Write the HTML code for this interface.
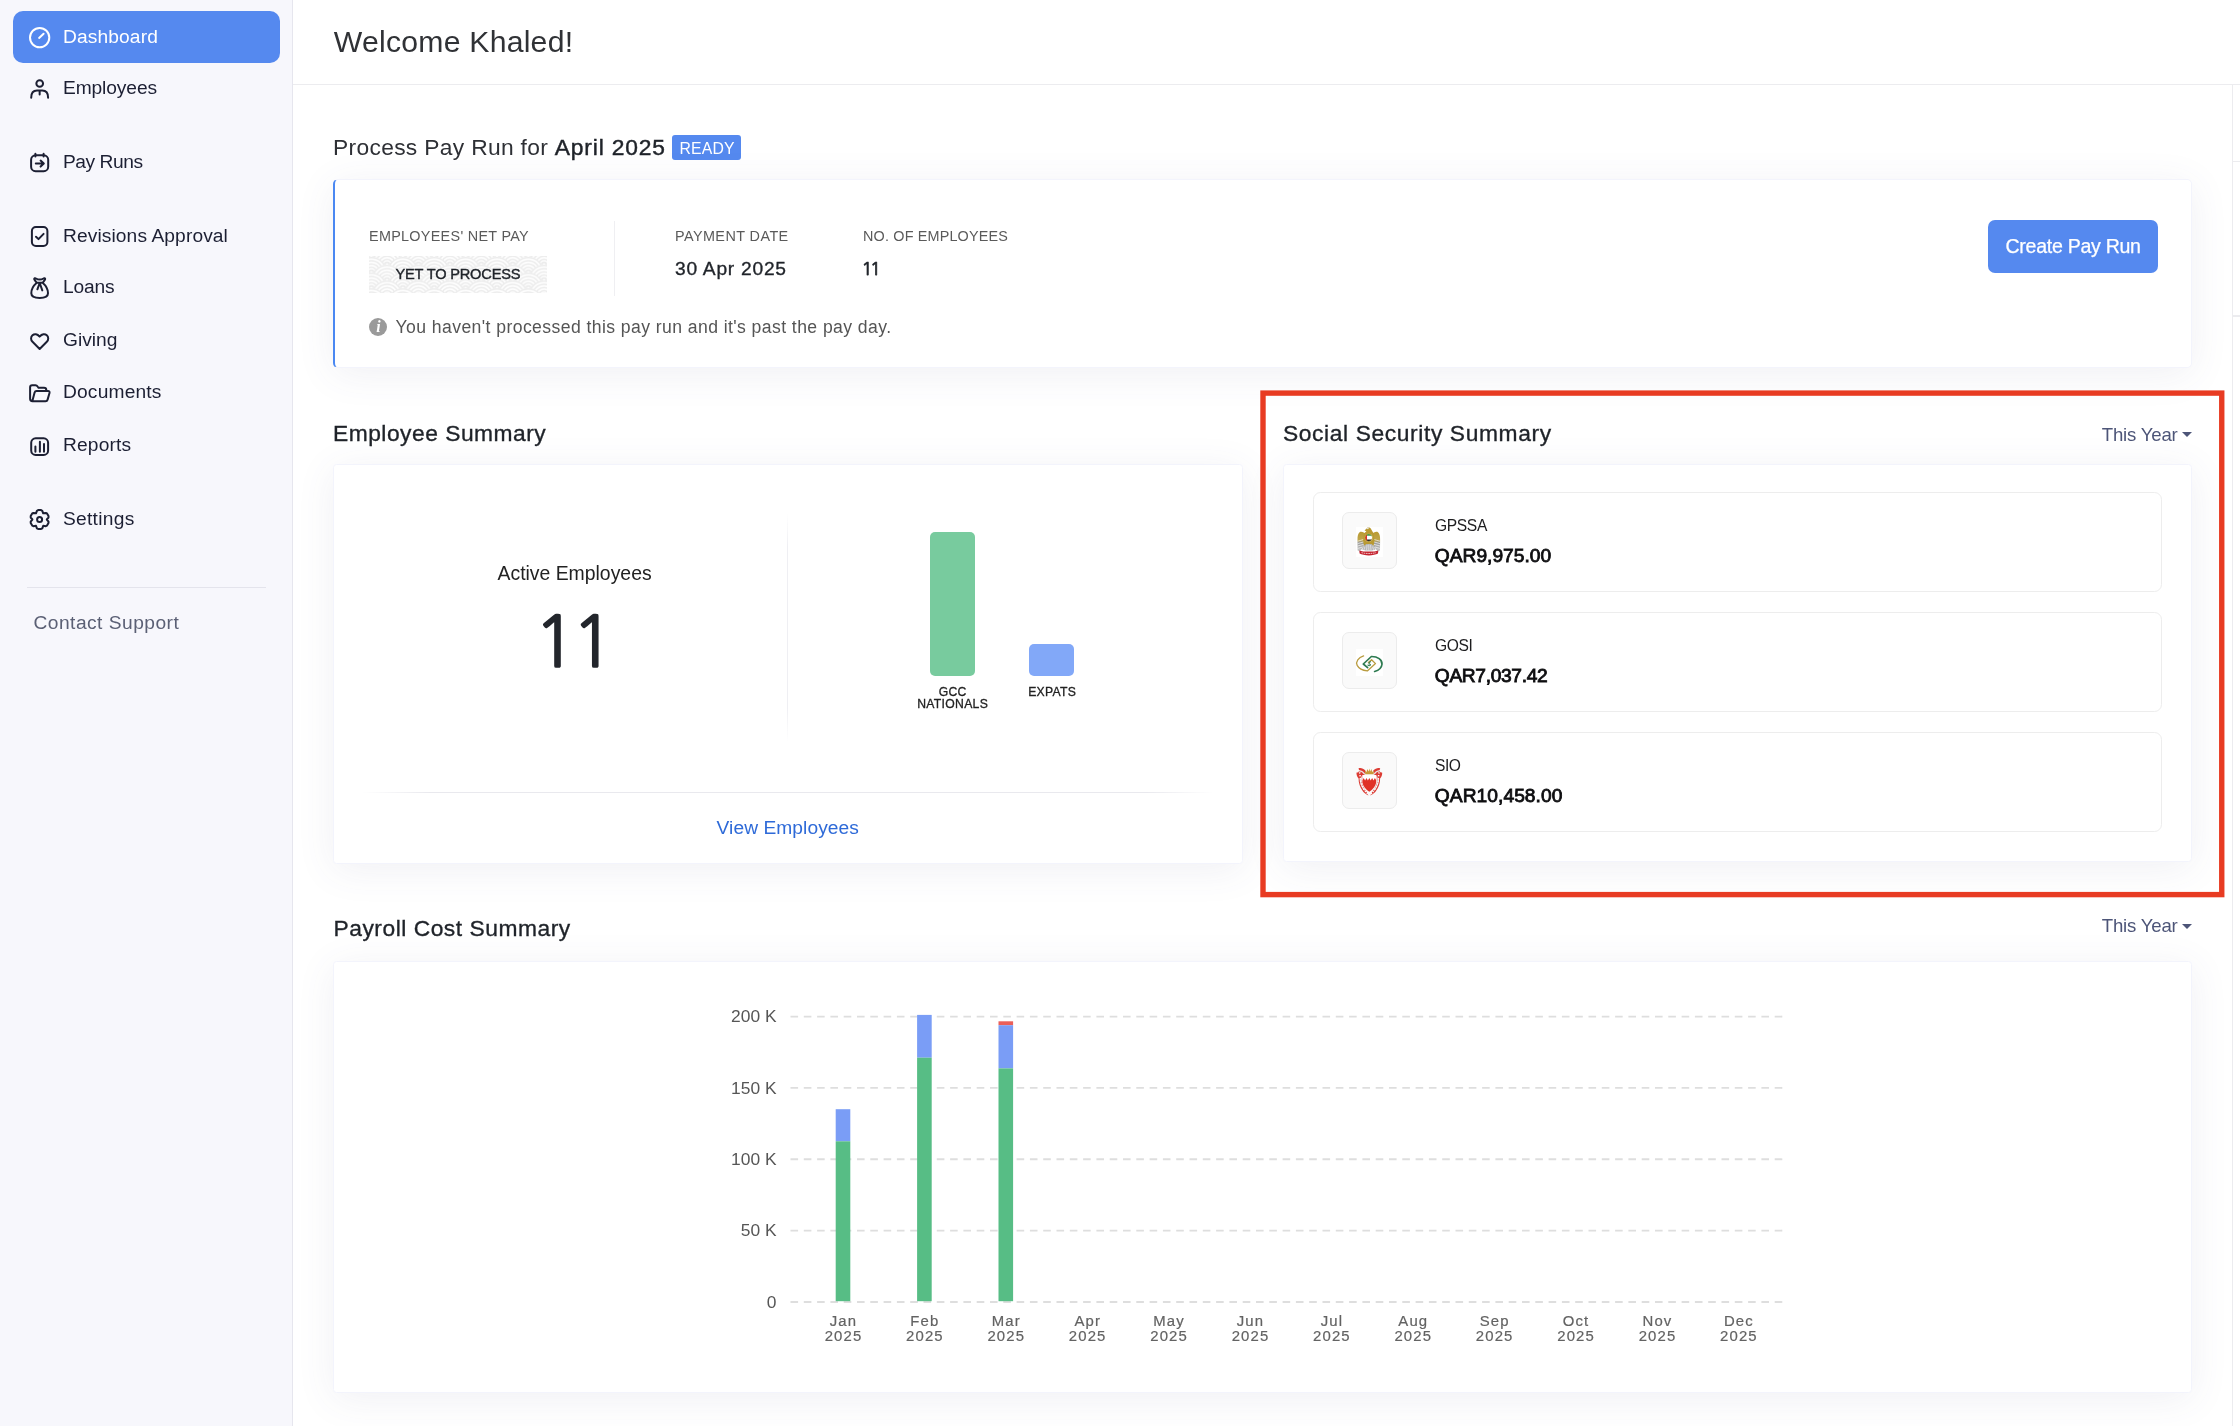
<!DOCTYPE html>
<html lang="en">
<head>
<meta charset="utf-8">
<title>Dashboard</title>
<style>
*{box-sizing:border-box;margin:0;padding:0}
html,body{width:2240px;height:1426px;overflow:hidden;background:#fff}
body{position:relative;font-family:"Liberation Sans",Arial,sans-serif;color:#1f2329}
.abs{position:absolute}
.t{position:absolute;white-space:nowrap;line-height:1;display:block}
#side{position:absolute;left:0;top:0;width:293px;height:1426px;background:#f7f7fc;border-right:1.5px solid #e6e6ee}
#main{position:absolute;left:293px;top:0;width:1947px;height:1426px;background:#fff}
#content{position:absolute;left:293px;top:85px;width:1939px;height:1341px;background:#fff}
.nav{font-size:19.2px;color:#1c1f33;left:63px}
.ico{position:absolute;left:26px;width:28px;height:28px;fill:none;stroke:#1c1f33;stroke-width:2;stroke-linecap:round;stroke-linejoin:round;overflow:visible}
.card{position:absolute;background:#fff;border:1px solid #f3f4fc;border-radius:3.5px;box-shadow:0 6px 38px rgba(80,80,130,.085)}
.h2{font-size:22.8px;color:#1f2329;-webkit-text-stroke:.35px #1f2329}
.lbl{font-size:14.4px;color:#5a5a5a}
.val{font-size:19.2px;color:#1f2329;-webkit-text-stroke:.35px #1f2329}
.yr{font-size:18.6px;color:#4d5578}
.caret{position:absolute;width:0;height:0;border-left:5px solid transparent;border-right:5px solid transparent;border-top:5.5px solid #4d5578}
.item{position:absolute;left:1313px;width:849px;height:100px;border:1px solid #ededed;border-radius:7.5px;background:#fff}
.logo{position:absolute;left:1342px;width:55px;height:57px;border:1.5px solid #ececec;border-radius:7px;background:#fafafa}
.logo i{position:absolute;left:13.1px;top:14px;width:26.6px;height:29.8px;background:#fff;display:block}
.nm{font-size:15.6px;color:#1d1d1f;left:1435px}
.amt{font-size:19.2px;color:#0e0e10;left:1434.8px;-webkit-text-stroke:.85px #0e0e10}
</style>
</head>
<body>
<div id="wrap" style="position:absolute;left:0;top:0;width:2240px;height:1426px;will-change:transform">
<div id="main"></div>
<div id="content"></div>
<div id="side"></div>
<!--SIDEBAR-->
<div class="abs" style="left:13px;top:11px;width:267px;height:52px;background:#5589ef;border-radius:10px"></div>
<svg class="abs" style="left:0;top:0;overflow:visible" width="293" height="600" viewBox="0 0 293 600" fill="none" stroke="#1c1f33" stroke-width="2" stroke-linecap="round" stroke-linejoin="round">
<g stroke="#fff"><circle cx="39.65" cy="37.6" r="9.65"/><path d="M39.1,37.9 L43.6,33.7"/></g>
<circle cx="39.7" cy="83.5" r="3.35"/><path d="M31.2,97.7 C31.2,93 33.5,90.5 37,90.5 L42.3,90.5 C45.8,90.5 48.1,93 48.1,97.7 M39.65,90.5 V94.5"/>
<rect x="31.1" y="155.3" width="17.1" height="15.9" rx="4.5"/><path d="M35.4,153.8 V156.5 M43.6,153.8 V156.5 M35.8,163.6 H43.6 M40.6,160.6 L43.8,163.6 L40.6,166.6"/>
<rect x="31.9" y="227.1" width="15.5" height="18.8" rx="4"/><path d="M36,236.7 L38.5,239.1 L43.6,233.9"/>
<path d="M34.3,279.4 C33.9,278.2 35.2,277.8 36.1,278.5 C38,279.9 41.4,279.9 43.3,278.5 C44.2,277.8 45.5,278.2 45.1,279.4 L42.7,282.8 L36.7,282.8 Z M36.8,282.8 C33,286 31.3,290 31.3,293.3 C31.3,296.5 34,298 39.7,298 C45.4,298 48,296.5 48,293.3 C48,290 46.3,286 42.6,282.8 M39.7,283 L37.4,289.3 M39.7,283 L42.3,290.4"/>
<path d="M39.65,349 L32.5,341.8 C30.6,339.9 30.6,337 32.5,335.3 C34.4,333.6 37.3,333.9 39.65,336.6 C42,333.9 44.9,333.6 46.8,335.3 C48.7,337 48.7,339.9 46.8,341.8 Z"/>
<path d="M32.5,401.2 C31,401.2 30.1,400.3 30.1,398.8 L30.1,387.3 C30.1,386 31,385.3 32.2,385.3 L35.5,385.3 C36.5,385.3 37,385.6 37.6,386.5 L38.6,387.8 L44,387.8 C45.5,387.8 46.3,388.6 46.3,390 L46.3,391 M32.3,401.2 L34.6,392.5 C34.9,391.5 35.5,391 36.5,391 L48,391 C49.3,391 49.8,391.8 49.5,393 L47.6,399.6 C47.3,400.7 46.6,401.2 45.5,401.2 Z"/>
<rect x="31.2" y="438.3" width="16.9" height="16.6" rx="4.5"/><path d="M35.4,446.6 V451.8 M39.9,441.7 V451.8 M44,444.1 V451.8"/>
<path d="M42.3,510.8 L41.1,510.1 L38.1,510.1 L36.9,510.8 L36.0,513.3 L33.4,512.9 L32.2,513.5 L30.7,516.1 L30.7,517.5 L32.4,519.5 L30.7,521.6 L30.7,523.0 L32.2,525.6 L33.4,526.2 L36.0,525.8 L36.9,528.3 L38.1,529.0 L41.1,529.0 L42.3,528.3 L43.2,525.8 L45.8,526.2 L47.0,525.6 L48.5,523.0 L48.5,521.6 L46.8,519.5 L48.5,517.5 L48.5,516.1 L47.0,513.5 L45.8,512.9 L43.2,513.3Z"/><circle cx="39.6" cy="519.5" r="2.5"/>
</svg>
<span id="n1" class="t nav" style="top:26.9px;letter-spacing:0.12px;color:#fff">Dashboard</span>
<span id="n2" class="t nav" style="top:77.8px;letter-spacing:-0.11px">Employees</span>
<span id="n3" class="t nav" style="top:151.8px;letter-spacing:-0.45px">Pay Runs</span>
<span id="n4" class="t nav" style="top:225.8px;letter-spacing:0.1px">Revisions Approval</span>
<span id="n5" class="t nav" style="top:277.4px;letter-spacing:-0.18px">Loans</span>
<span id="n6" class="t nav" style="top:329.8px;letter-spacing:0px">Giving</span>
<span id="n7" class="t nav" style="top:382.2px;letter-spacing:0.17px">Documents</span>
<span id="n8" class="t nav" style="top:435.2px;letter-spacing:0.16px">Reports</span>
<span id="n9" class="t nav" style="top:509.2px;letter-spacing:0.27px">Settings</span>
<div class="abs" style="left:27px;top:586.5px;width:239px;height:1.5px;background:#e4e4ec"></div>
<span id="n10" class="t" style="left:33.5px;top:612.7px;font-size:19.2px;letter-spacing:.47px;color:#5b6075">Contact Support</span>
<!--HEADER-->
<span id="h1" class="t" style="left:333.8px;top:26.5px;font-size:30.2px;color:#303236;letter-spacing:.23px">Welcome Khaled!</span>
<div class="abs" style="left:293px;top:83.5px;width:1947px;height:1.5px;background:#ececef"></div>
<div class="abs" style="left:2231.5px;top:85px;width:1.5px;height:1341px;background:#ececef"></div>
<div class="abs" style="left:2233px;top:85px;width:7px;height:1341px;background:#fff"></div>
<div class="abs" style="left:2233px;top:160.5px;width:7px;height:1.5px;background:#ececef"></div>
<div class="abs" style="left:2233px;top:315px;width:7px;height:1.5px;background:#ececef"></div>
<!--PAYRUN-->
<span id="p1" class="t" style="left:333px;top:136.1px;font-size:22.8px;color:#2e3035;letter-spacing:.32px">Process Pay Run for <span id="p1b" style="letter-spacing:.84px;-webkit-text-stroke:.45px #1f2329;color:#1f2329">April 2025</span></span>
<div class="abs" style="left:672px;top:135px;width:69px;height:25px;background:#5589ef;border-radius:3px"></div>
<span id="p2" class="t" style="left:679.5px;top:140.6px;font-size:15.8px;color:#fff;letter-spacing:.15px">READY</span>
<div class="card" style="left:333px;top:179px;width:1859px;height:189px;border-left:2.2px solid #4a88f2;border-radius:5px"></div>
<span id="p3" class="t lbl" style="left:369px;top:229.1px;letter-spacing:.29px">EMPLOYEES' NET PAY</span>
<svg class="abs" id="ytp" style="left:369px;top:256px" width="178" height="37" viewBox="0 0 178 37">
<defs><g id="sc" fill="none" stroke="#ebebeb" stroke-width="1.55"><circle r="15.7" fill="#fff" stroke="none"/><circle r="14.9"/><circle r="11.75"/><circle r="8.6"/><circle r="5.45"/><circle r="2.3"/></g>
<pattern id="sg" width="31.4" height="15.7" patternUnits="userSpaceOnUse" patternTransform="translate(18.1,24.4)"><use href="#sc" x="0.00" y="-15.700"/><use href="#sc" x="31.40" y="-15.700"/><use href="#sc" x="-15.70" y="-7.850"/><use href="#sc" x="15.70" y="-7.850"/><use href="#sc" x="47.10" y="-7.850"/><use href="#sc" x="0.00" y="0.000"/><use href="#sc" x="31.40" y="0.000"/><use href="#sc" x="-15.70" y="7.850"/><use href="#sc" x="15.70" y="7.850"/><use href="#sc" x="47.10" y="7.850"/><use href="#sc" x="0.00" y="15.700"/><use href="#sc" x="31.40" y="15.700"/><use href="#sc" x="-15.70" y="23.550"/><use href="#sc" x="15.70" y="23.550"/><use href="#sc" x="47.10" y="23.550"/><use href="#sc" x="0.00" y="31.400"/><use href="#sc" x="31.40" y="31.400"/></pattern></defs>
<rect width="178" height="37" fill="#fff"/><rect width="178" height="37" fill="url(#sg)"/></svg>
<span id="p4" class="t" style="left:395.5px;top:266.9px;font-size:14.6px;color:#1f2329;letter-spacing:-.18px;-webkit-text-stroke:.4px #1f2329">YET TO PROCESS</span>
<div class="abs" style="left:614px;top:221px;width:1px;height:75px;background:#efeff2"></div>
<span id="p5" class="t lbl" style="left:675px;top:229.1px;letter-spacing:.43px">PAYMENT DATE</span>
<span id="p6" class="t val" style="left:675px;top:259.2px;letter-spacing:.75px">30 Apr 2025</span>
<span id="p7" class="t lbl" style="left:863px;top:229.1px;letter-spacing:.17px">NO. OF EMPLOYEES</span>
<span id="p8" class="t val" style="left:861.5px;top:259.6px;font-family:'NanumGothic','Liberation Sans',sans-serif;font-size:18.4px;letter-spacing:-2.6px;-webkit-text-stroke:.75px #1f2329">11</span>
<div class="abs" style="left:368.8px;top:317.9px;width:18.6px;height:18.6px;border-radius:50%;background:#9a9a9a"></div>
<span class="t" style="left:376.2px;top:318.8px;font-size:15.8px;color:#fff;font-family:'Liberation Serif',serif;font-style:italic;font-weight:bold">i</span>
<span id="p9" class="t" style="left:395.5px;top:318.7px;font-size:17.6px;letter-spacing:.42px;color:#555">You haven't processed this pay run and it's past the pay day.</span>
<div class="abs" style="left:1988px;top:220px;width:170px;height:53px;background:#5589ef;border-radius:7px"></div>
<span id="p10" class="t" style="left:2005.5px;top:236.7px;font-size:19.6px;letter-spacing:-.3px;color:#fff;-webkit-text-stroke:.25px #fff">Create Pay Run</span>
<!--EMPSUM-->
<span id="e1" class="t h2" style="left:333px;top:421.7px;letter-spacing:.5px">Employee Summary</span>
<div class="card" style="left:333px;top:464px;width:910px;height:400px"></div>
<span id="e2" class="t" style="left:497.5px;top:564px;font-size:19.4px;color:#222">Active Employees</span>
<span id="e3" class="t" style="left:533.8px;top:605.5px;font-size:71px;color:#23262c;letter-spacing:-5.2px;font-family:'NanumGothic','Liberation Sans',sans-serif;-webkit-text-stroke:1.7px #23262c">11</span>
<div class="abs" style="left:787px;top:513px;width:1px;height:229px;background:linear-gradient(#fff,#efeff3 15%,#efeff3 85%,#fff)"></div>
<div class="abs" style="left:930px;top:532px;width:45px;height:144px;background:#78cb9e;border-radius:5px"></div>
<div class="abs" style="left:1029.4px;top:644px;width:44.8px;height:32px;background:#82a8f8;border-radius:5px"></div>
<span id="e4" class="t" style="left:952.7px;transform:translateX(-50%);top:685.6px;font-size:12.2px;color:#222;letter-spacing:.3px;-webkit-text-stroke:.3px #222">GCC</span>
<span id="e5" class="t" style="left:952.7px;transform:translateX(-50%);top:697.8px;font-size:12.2px;color:#222;letter-spacing:.3px;-webkit-text-stroke:.3px #222">NATIONALS</span>
<span id="e6" class="t" style="left:1052.2px;transform:translateX(-50%);top:685.6px;font-size:12.2px;color:#222;letter-spacing:.3px;-webkit-text-stroke:.3px #222">EXPATS</span>
<div class="abs" style="left:362px;top:792px;width:852px;height:1px;background:linear-gradient(90deg,#fff,#e9e9ee 8%,#e9e9ee 92%,#fff)"></div>
<span id="e7" class="t" style="left:716.6px;top:817.9px;font-size:19.2px;letter-spacing:.06px;color:#2e6ad8">View Employees</span>
<!--SOCIAL-->
<span id="s1" class="t h2" style="left:1283px;top:421.7px;letter-spacing:.61px">Social Security Summary</span>
<span id="s2" class="t yr" style="left:2101.8px;top:426.2px;letter-spacing:-.2px">This Year</span><div class="caret" style="left:2182px;top:432px"></div>
<div class="card" style="left:1283px;top:464px;width:909px;height:398.4px"></div>
<div class="item" style="top:492px"></div><div class="item" style="top:612px"></div><div class="item" style="top:732px"></div>
<div class="logo" style="top:512px"><i></i></div><div class="logo" style="top:632px"><i style="top:16.2px;height:26.6px"></i></div><div class="logo" style="top:752px"></div>
<svg class="abs" style="left:0;top:0" width="2240" height="1426" viewBox="0 0 2240 1426">
<defs><linearGradient id="wg" x1="0" y1="0" x2="0" y2="1"><stop offset="0" stop-color="#b99a32"/><stop offset=".42" stop-color="#bfa54a"/><stop offset=".55" stop-color="#9a9a98"/><stop offset="1" stop-color="#c9c9c9"/></linearGradient></defs>
<g>
<path d="M1359.6,532.2 C1358,533.5 1357.4,536 1357.5,540 L1357.6,550.5 L1359.8,551.6 L1363.6,546.8 L1364.6,540 L1366.2,534.4 C1364,532.2 1361.5,531.3 1359.6,532.2Z" fill="url(#wg)"/>
<path d="M1378,532.2 C1379.6,533.5 1380.2,536 1380.1,540 L1380,550.5 L1377.8,551.6 L1374,546.8 L1373,540 L1371.4,534.4 C1373.6,532.2 1376.1,531.3 1378,532.2Z" fill="url(#wg)"/>
<path d="M1364.5,530.5 L1367.8,527.3 C1369.5,527 1371,528.2 1371.6,530 L1373.6,533.4 L1374.6,541 L1373.4,546.5 L1371,544.2 L1366.6,544.2 L1364.2,546.5 L1363,541 L1364,533.4 L1366.4,531.2Z" fill="#b99a32"/>
<path d="M1362.2,549.5 L1364.2,545.5 L1366.5,544 L1371.2,544 L1373.4,545.5 L1375.4,549.5 L1372,550.6 L1365.6,550.6Z" fill="#b4b4b6"/>
<path d="M1366.2,528.6 L1367.8,527.3 L1369.4,527.6 L1368,529.3Z" fill="#e8e4da"/>
<path d="M1357.6,541.2 L1363.2,539.6 M1357.6,543.6 L1363.4,542 M1357.6,546 L1363.6,544.4 M1357.7,548.4 L1362.6,547 M1380,541.2 L1374.4,539.6 M1380,543.6 L1374.2,542 M1380,546 L1374,544.4 M1379.9,548.4 L1375,547" stroke="#fff" stroke-width=".75" fill="none" opacity=".85"/>
<path d="M1365,546.6 L1364,549.8 M1367,545 L1366.6,550.2 M1368.8,544.6 V550.4 M1370.6,545 L1371,550.2 M1372.6,546.6 L1373.6,549.8" stroke="#fff" stroke-width=".7" fill="none" opacity=".8"/>
<circle cx="1368.7" cy="537.7" r="3.9" fill="#fff"/>
<path d="M1365.3,535.8 A3.9,3.9 0 0 1 1372.1,535.8 Z" fill="#2f9e4f"/>
<path d="M1365.3,539.6 A3.9,3.9 0 0 0 1372.1,539.6 Z" fill="#2b2b2b"/>
<path d="M1367,534.2 A3.9,3.9 0 0 0 1367,541.2 Z" fill="#d8322a"/>
<circle cx="1368.7" cy="537.7" r="3.9" fill="none" stroke="#b99a32" stroke-width=".8"/>
<path d="M1359.3,550.4 C1363,552 1374.6,552 1378.3,550.4 L1378,553.6 C1374,556 1363.6,556 1359.6,553.6Z" fill="#c4222f"/>
<path d="M1361.5,552.6 C1365,553.8 1372.6,553.8 1376.1,552.6" stroke="#f3c9cc" stroke-width=".9" fill="none" stroke-dasharray="1.6 .7"/>
</g>
<g fill="none" stroke-linecap="round" stroke-linejoin="round">
<path d="M1363.6,655.9 C1358.4,657.6 1355.4,661.6 1357.2,665.4 C1359,668.8 1362.8,670.4 1367.3,670.9 L1375.5,663.6 L1371.6,659.7 L1368.4,662.6" stroke="#b99b3e" stroke-width="1.3"/>
<path d="M1367.6,667.7 L1363.3,664 L1371.4,656.5 C1377.6,656.4 1382.3,659.6 1382,664.2 C1381.7,667.6 1378.6,670.3 1374.6,671.5" stroke="#2d7a50" stroke-width="1.7"/>
<path d="M1370.6,661.8 C1369,662.2 1368.4,663.4 1369.6,664 C1370.8,664.5 1370.8,665.6 1369.2,665.8 L1367.9,665" stroke="#2d7a50" stroke-width="1.1"/>
</g>
<g>
<path d="M1358.5,768.4 C1360.5,767.4 1363.6,768.6 1365.4,770.6 L1364.8,774.4 L1361.4,776.4 C1360.6,779.6 1361.6,783.6 1363.6,787.2 C1365,789.8 1367,792.6 1368.4,795.4 C1366,794.6 1363.4,792.4 1362.4,790.6 C1360.2,787.6 1358.4,782.6 1358.6,778.6 C1356.8,776.6 1356.2,773.6 1356.6,772.4 C1358.6,772.8 1359.6,771.6 1358.5,768.4Z" fill="#dc3b33"/>
<path d="M1380.2,768.4 C1378.2,767.4 1375.1,768.6 1373.3,770.6 L1373.9,774.4 L1377.3,776.4 C1378.1,779.6 1377.1,783.6 1375.1,787.2 C1373.7,789.8 1371.7,792.6 1370.3,795.4 C1372.7,794.6 1375.3,792.4 1376.3,790.6 C1378.5,787.6 1380.3,782.6 1380.1,778.6 C1381.9,776.6 1382.5,773.6 1382.1,772.4 C1380.1,772.8 1379.1,771.6 1380.2,768.4Z" fill="#dc3b33"/>
<path d="M1358.8,770.6 C1361.5,771 1363.6,772.4 1364.6,774.2 M1379.9,770.6 C1377.2,771 1375.1,772.4 1374.1,774.2 M1360.2,779 C1360.4,783 1362,787 1364.6,790.4 M1378.5,779 C1378.3,783 1376.7,787 1374.1,790.4" stroke="#e9e2e2" stroke-width="1.3" fill="none"/>
<path d="M1358,770 C1360.5,771.5 1360,777 1360.6,781 C1361.4,786 1364.6,790.6 1367.6,794 M1380.7,770 C1378.2,771.5 1378.7,777 1378.1,781 C1377.3,786 1374.1,790.6 1371.1,794" stroke="#fafafa" stroke-width="1.5" fill="none" stroke-dasharray="1.3 1.5"/>
<path d="M1362.3,775 L1376.4,775 L1376.2,782.6 C1375.6,786.6 1372.6,789.8 1369.3,791.8 C1366,789.8 1363,786.6 1362.4,782.6Z" fill="#e03126"/>
<path d="M1362.3,775 L1376.4,775 L1376.3,780.6 L1374.9,778 L1373.5,780.6 L1372.1,778 L1370.7,780.6 L1369.3,778 L1367.9,780.6 L1366.5,778 L1365.1,780.6 L1363.7,778 L1362.4,780.6Z" fill="#fff"/>
<path d="M1365.2,774.2 L1364.9,770.4 L1366.6,772 L1367.2,769 L1368.6,771.6 L1369.35,768.6 L1370.1,771.6 L1371.5,769 L1372.1,772 L1373.8,770.4 L1373.5,774.2Z" fill="#c99a3a"/>
</g>
</svg>
<span id="s3" class="t nm" style="top:518.3px;letter-spacing:-0.36px">GPSSA</span>
<span id="s4" class="t amt" style="top:546.4px">QAR9,975.00</span>
<span id="s5" class="t nm" style="top:638.3px;letter-spacing:-0.42px">GOSI</span>
<span id="s6" class="t amt" style="top:666.4px;letter-spacing:-0.34px">QAR7,037.42</span>
<span id="s7" class="t nm" style="top:758.3px;letter-spacing:-0.5px">SIO</span>
<span id="s8" class="t amt" style="top:786.4px;letter-spacing:0.06px">QAR10,458.00</span>
<svg class="abs" style="left:0;top:0" width="2240" height="1426" viewBox="0 0 2240 1426"><rect x="1263" y="393.1" width="958.75" height="501.5" fill="none" stroke="#e83b22" stroke-width="5.4"/></svg>
<!--CHART-->
<span id="c1" class="t h2" style="left:333.5px;top:916.8px;letter-spacing:.52px">Payroll Cost Summary</span>
<span id="c2" class="t yr" style="left:2101.8px;top:917.3px;letter-spacing:-.2px">This Year</span><div class="caret" style="left:2182px;top:924px"></div>
<div class="card" style="left:333px;top:960.5px;width:1859px;height:432.5px"></div>
<svg class="abs" style="left:0;top:0" width="2240" height="1426" viewBox="0 0 2240 1426" font-family="Liberation Sans, Arial, sans-serif">
<g stroke="#dedede" stroke-width="1.9" stroke-dasharray="7.6 5.7" transform="translate(0,.4)"><path d="M790.5,1016.2 H1783"/><path d="M790.5,1087.5 H1783"/><path d="M790.5,1158.9 H1783"/><path d="M790.5,1230.2 H1783"/><path d="M790.5,1301.6 H1783"/></g>
<g fill="#565656" font-size="17.4" text-anchor="end"><text x="776.5" y="1022.2">200 K</text><text x="776.5" y="1093.5">150 K</text><text x="776.5" y="1164.9">100 K</text><text x="776.5" y="1236.2">50 K</text><text x="776.5" y="1307.6">0</text></g>
<rect x="835.7" y="1109.2" width="14.6" height="32.1" fill="#7a9df6"/><rect x="835.7" y="1141.3" width="14.6" height="159.9" fill="#57bd85"/><rect x="917.1" y="1014.9" width="14.6" height="42.8" fill="#7a9df6"/><rect x="917.1" y="1057.7" width="14.6" height="243.5" fill="#57bd85"/><rect x="998.5" y="1021.3" width="14.6" height="3.9" fill="#ea5f59"/><rect x="998.5" y="1025.2" width="14.6" height="43.2" fill="#7a9df6"/><rect x="998.5" y="1068.4" width="14.6" height="232.8" fill="#57bd85"/>
<g fill="#636363" stroke="#636363" stroke-width=".2" font-size="14.9" text-anchor="middle" letter-spacing="1.15" transform="translate(.5,0)"><text x="843.0" y="1325.6">Jan</text><text x="843.0" y="1340.8">2025</text><text x="924.4" y="1325.6">Feb</text><text x="924.4" y="1340.8">2025</text><text x="1005.8" y="1325.6">Mar</text><text x="1005.8" y="1340.8">2025</text><text x="1087.2" y="1325.6">Apr</text><text x="1087.2" y="1340.8">2025</text><text x="1168.6" y="1325.6">May</text><text x="1168.6" y="1340.8">2025</text><text x="1250.0" y="1325.6">Jun</text><text x="1250.0" y="1340.8">2025</text><text x="1331.4" y="1325.6">Jul</text><text x="1331.4" y="1340.8">2025</text><text x="1412.8" y="1325.6">Aug</text><text x="1412.8" y="1340.8">2025</text><text x="1494.2" y="1325.6">Sep</text><text x="1494.2" y="1340.8">2025</text><text x="1575.6" y="1325.6">Oct</text><text x="1575.6" y="1340.8">2025</text><text x="1657.0" y="1325.6">Nov</text><text x="1657.0" y="1340.8">2025</text><text x="1738.4" y="1325.6">Dec</text><text x="1738.4" y="1340.8">2025</text></g>
</svg>
</div>
</body>
</html>
